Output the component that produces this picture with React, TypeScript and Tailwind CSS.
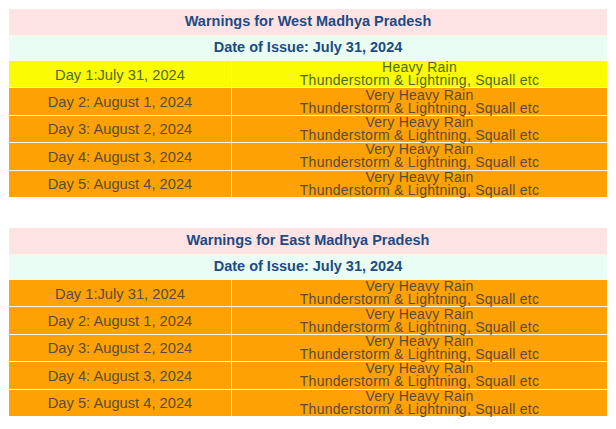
import React from "react";

type Row = { day: string; level: "yellow" | "orange"; rain: string };

const WEST: Row[] = [
  { day: "Day 1:July 31, 2024", level: "yellow", rain: "Heavy Rain" },
  { day: "Day 2: August 1, 2024", level: "orange", rain: "Very Heavy Rain" },
  { day: "Day 3: August 2, 2024", level: "orange", rain: "Very Heavy Rain" },
  { day: "Day 4: August 3, 2024", level: "orange", rain: "Very Heavy Rain" },
  { day: "Day 5: August 4, 2024", level: "orange", rain: "Very Heavy Rain" },
];

const EAST: Row[] = [
  { day: "Day 1:July 31, 2024", level: "orange", rain: "Very Heavy Rain" },
  { day: "Day 2: August 1, 2024", level: "orange", rain: "Very Heavy Rain" },
  { day: "Day 3: August 2, 2024", level: "orange", rain: "Very Heavy Rain" },
  { day: "Day 4: August 3, 2024", level: "orange", rain: "Very Heavy Rain" },
  { day: "Day 5: August 4, 2024", level: "orange", rain: "Very Heavy Rain" },
];

function WarningTable({ region, rows }: { region: string; rows: Row[] }) {
  return (
    <div className="flex w-[598px] flex-col gap-px bg-[#fdf6e0]">
      <div className="flex h-[26px] items-center justify-center bg-[#fde3e3] text-[14.5px] font-bold text-[#1d4b85]">
        Warnings for {region}
      </div>
      <div className="flex h-[24px] items-center justify-center bg-[#e9fdf4] text-[14.5px] font-bold text-[#1d4b85]">
        Date of Issue: July 31, 2024
      </div>
      {rows.map((r) => {
        const yellow = r.level === "yellow";
        const bg = yellow ? "bg-[#fbfb04]" : "bg-[#fea104]";
        const fg = yellow ? "text-[#4f6a1f]" : "text-[#5a4d33]";
        return (
          <div key={r.day} className="flex h-[26.4px] gap-px">
            <div
              className={`flex w-[222px] items-center justify-center pt-px text-[14.7px] ${bg} ${fg}`}
            >
              {r.day}
            </div>
            <div
              className={`flex flex-1 flex-col items-center justify-center text-[14px] leading-[13px] tracking-[0.25px] ${bg} ${fg}`}
            >
              <span>{r.rain}</span>
              <span>Thunderstorm &amp; Lightning, Squall etc</span>
            </div>
          </div>
        );
      })}
    </div>
  );
}

export default function App() {
  return (
    <div
      className="flex h-[429px] w-[616px] flex-col gap-[31px] bg-white pl-[9px] pt-[9px]"
      style={{ fontFamily: '"Liberation Sans", Arial, sans-serif' }}
    >
      <WarningTable region="West Madhya Pradesh" rows={WEST} />
      <WarningTable region="East Madhya Pradesh" rows={EAST} />
    </div>
  );
}
